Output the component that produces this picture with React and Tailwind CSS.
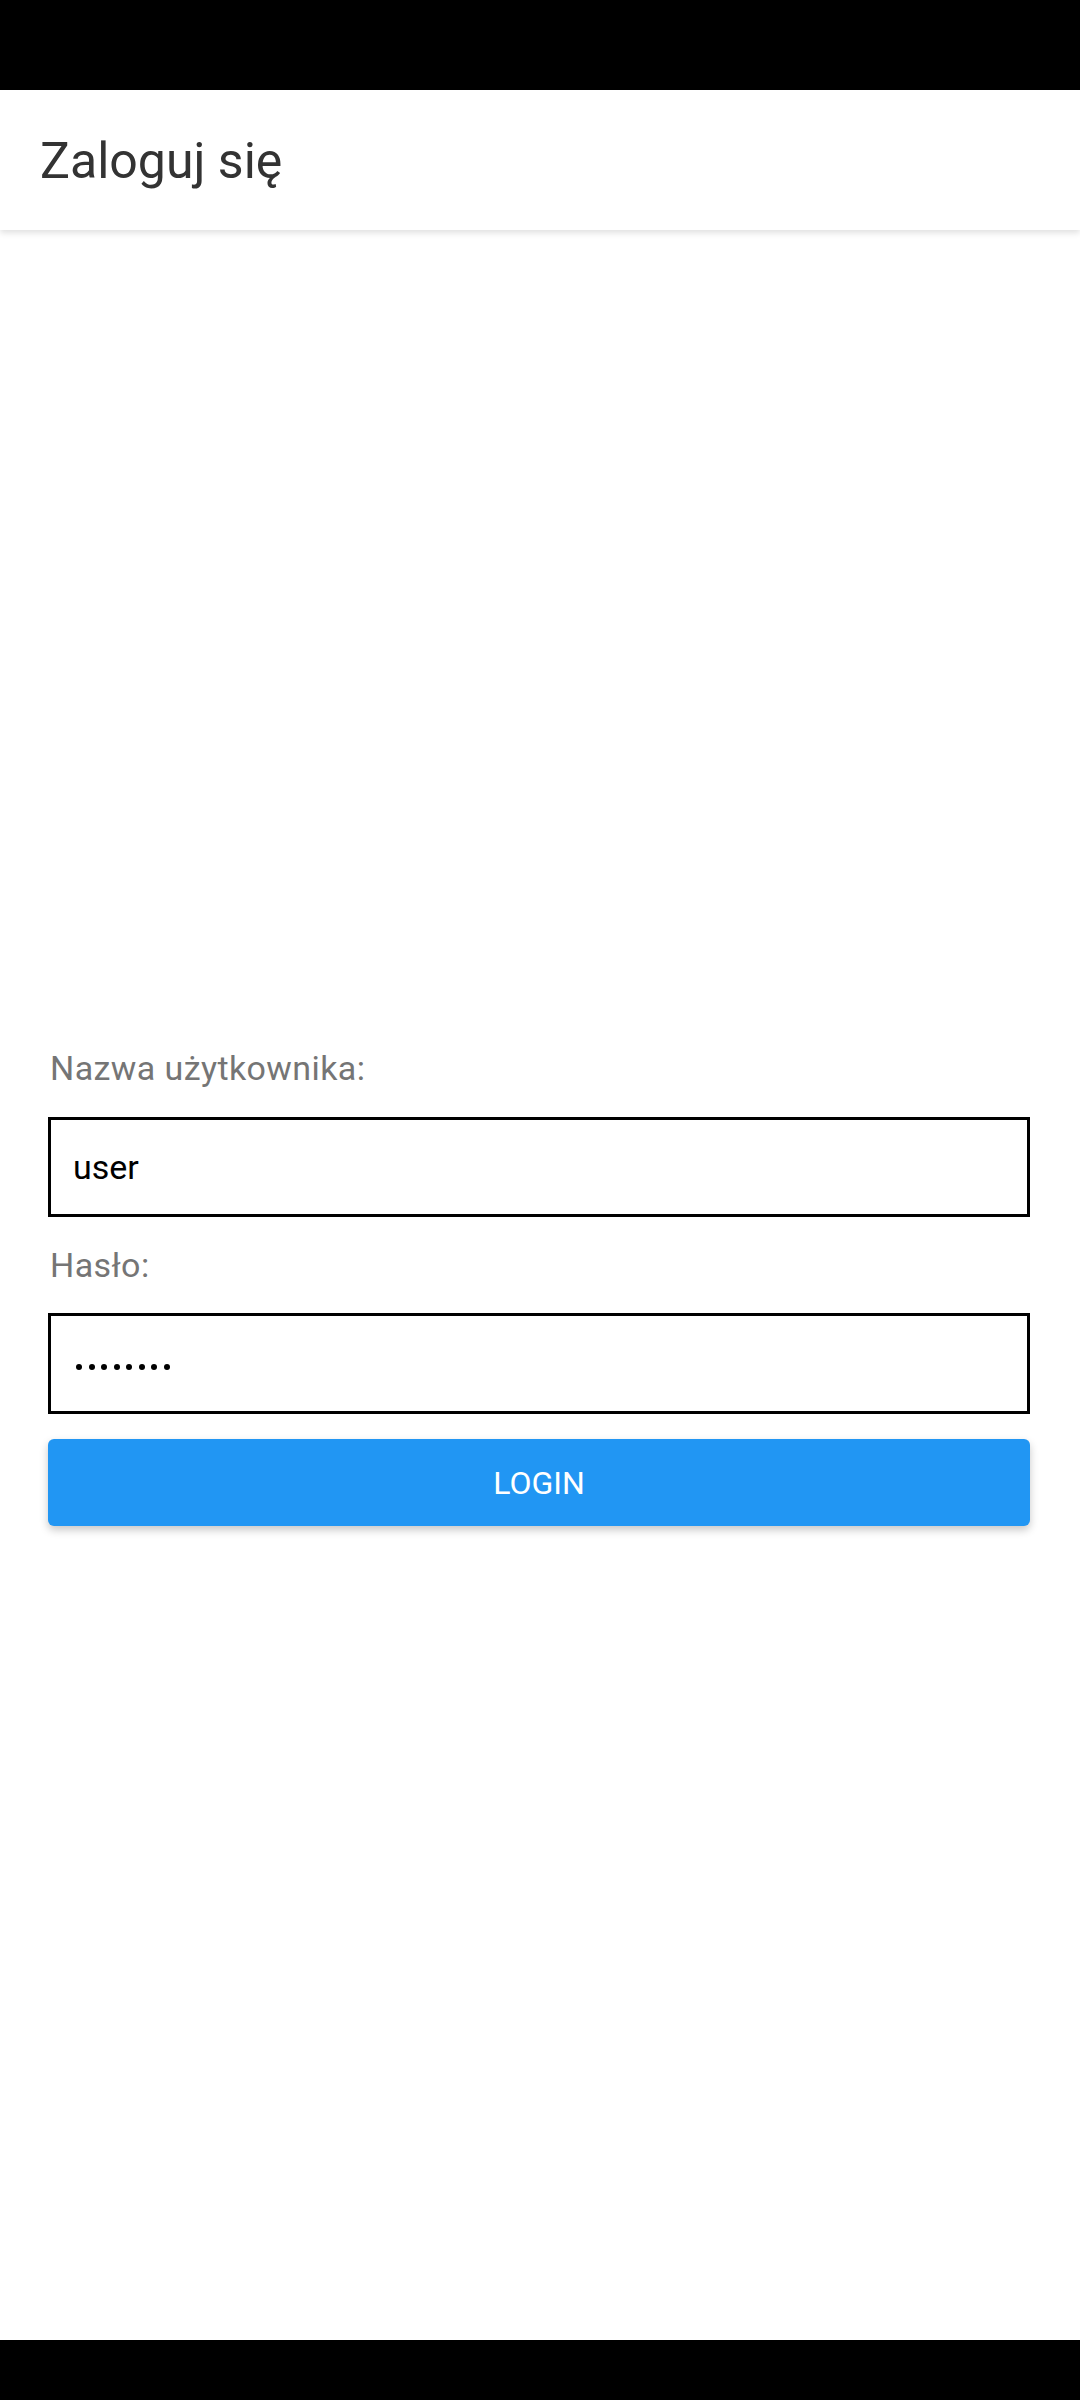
import React from "react";

export default function App() {
  const font = { fontFamily: "Roboto, 'Noto Sans', sans-serif" };
  return (
    <div className="flex flex-col h-[2400px] w-[1080px] bg-white" style={font}>
      <div className="h-[90px] bg-black shrink-0" />
      <header className="relative z-10 h-[140px] shrink-0 bg-white flex items-center px-[40px] shadow-[0_3px_6px_rgba(0,0,0,0.12)]">
        <h1 className="text-[50px] leading-none text-[#333333] font-normal pt-[2px]">Zaloguj się</h1>
      </header>
      <main className="flex-1 flex flex-col justify-center pl-[48px] pr-[50px]">
        <label className="block h-[48px] leading-[48px] text-[34px] text-[#757575] pl-[2px] tracking-[0.4px]">Nazwa użytkownika:</label>
        <div className="mt-[25px] h-[100px] border-[3px] border-black bg-white flex items-center pl-[22px] text-[34px] text-black">
          <span>user</span>
        </div>
        <label className="block mt-[24px] h-[48px] leading-[48px] text-[34px] text-[#757575] pl-[2px] tracking-[0.4px]">Hasło:</label>
        <div className="mt-[24px] h-[101px] border-[3px] border-black bg-white flex items-center pl-[25px] pt-[6px] gap-[6.5px]">
          {Array.from({ length: 8 }).map((_, i) => (
            <span key={i} className="w-[6px] h-[6px] rounded-full bg-black" />
          ))}
        </div>
        <button className="mt-[25px] h-[87px] w-full rounded-[6px] bg-[#2196F3] text-white text-[32px] uppercase shadow-[0_4px_8px_rgba(0,0,0,0.22)]">
          Login
        </button>
      </main>
      <div className="h-[60px] bg-black shrink-0" />
    </div>
  );
}
